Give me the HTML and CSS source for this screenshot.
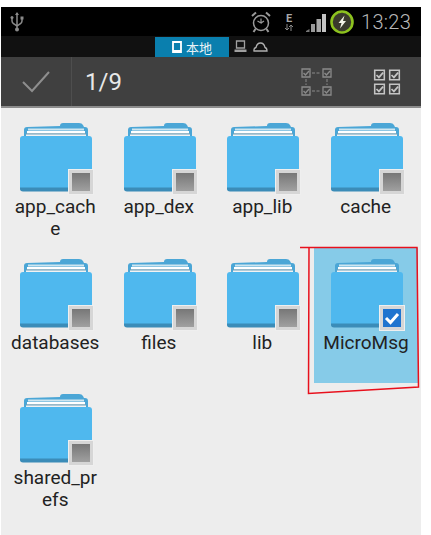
FILE: index.html
```html
<!DOCTYPE html>
<html lang="zh">
<head>
<meta charset="utf-8">
<title>Files</title>
<link rel="stylesheet" href="styles.css">
</head>
<body>
<svg class="defs" width="0" height="0">
  <defs>
    <symbol id="folder" viewBox="0 0 72 70">
      <path d="M40 4q0-3 3-3h16q3 0 4 2l1 2h1q3 0 3 3v10H4V8q0-3 3-3z" fill="#4ba6d6"/>
      <path d="M7 6h58v14H7z" fill="#4ba6d6"/>
      <path d="M8 6.500h56v2H8z" fill="#cfe6f0"/>
      <path d="M7 9h58v2.500H7z" fill="#ffffff"/>
      <path d="M6 11.500h60v1H6z" fill="#8c9ea6"/>
      <path d="M6 12.500h60v2H6z" fill="#f2f2f2"/>
      <path d="M0 17q0-3 3-3h66q3 0 3 3v49q0 3-3 3H3q-3 0-3-3z" fill="#4fb8ee"/>
      <path d="M0 65.500v1q0 3 3 3h66q3 0 3-3v-1z" fill="#3b8cb8"/>
    </symbol>
    <symbol id="box" viewBox="0 0 10 10">
      <path d="M1 1h8v8H1z" fill="none" stroke="currentColor" stroke-width="1.300"/>
      <path d="M2.500 5l2 2 3.500-4" fill="none" stroke="currentColor" stroke-width="1.400"/>
    </symbol>
  </defs>
</svg>

<main class="page">
  <header class="status">
    <svg class="usb" viewBox="0 0 14 20" width="14" height="20">
      <path d="M7 1v17M2 6v3q0 2 2 3l3 2 3-2q2-1 2-3V7" fill="none" stroke="#8a8a8a" stroke-width="1.500"/>
      <path d="M7 0l-2 3h4z" fill="#8a8a8a"/>
      <circle cx="7" cy="17.500" r="2" fill="#8a8a8a"/>
      <circle cx="2" cy="5.500" r="1.500" fill="#8a8a8a"/>
      <path d="M10.500 4.500h3v3h-3z" fill="#8a8a8a"/>
    </svg>
    <div class="status-right">
      <svg class="alarm" viewBox="0 0 20 22" width="20" height="22">
        <circle cx="10" cy="12" r="7.500" fill="none" stroke="#9a9a9a" stroke-width="1.500"/>
        <path d="M10 7.500V12l-3.500-2M10 12l3-2" fill="none" stroke="#9a9a9a" stroke-width="1.200"/>
        <path d="M1 5l4-3.500M19 5l-4-3.500M4.500 18l-2 3M15.500 18l2 3" fill="none" stroke="#9a9a9a" stroke-width="2"/>
      </svg>
      <div class="net">
        <span class="net-e">E</span>
        <svg viewBox="0 0 10 7" width="10" height="7">
          <path d="M3 0v6M1 4l2 2 2-2M7 7V1M5 3l2-2 2 2" fill="none" stroke="#8a8a8a" stroke-width="1"/>
        </svg>
      </div>
      <svg class="signal" viewBox="0 0 20 18" width="20" height="18">
        <path d="M0 18h3.500v-3L0 17z" fill="#777"/>
        <path d="M5 18h4v-8H5z" fill="#9a9a9a"/>
        <path d="M10.500 18H15V5h-4.500z" fill="#a8a8a8"/>
        <path d="M16 18h4V0h-4z" fill="#c4c4c4"/>
      </svg>
      <svg class="battery" viewBox="0 0 26 26" width="26" height="26">
        <circle cx="13" cy="13" r="9.500" fill="#3a3a2c"/>
        <circle cx="13" cy="13" r="10.500" fill="none" stroke="#8dc21f" stroke-width="2.600"/>
        <path d="M15.500 6.500L9.500 14h3l-1.500 5.500 6-7.500h-3z" fill="#f4f4e8"/>
      </svg>
      <span class="clock">13:23</span>
    </div>
  </header>

  <nav class="tabs">
    <div class="tab-active">
      <svg viewBox="0 0 10 12" width="10" height="12">
        <path d="M1 1h8v10H1z" fill="none" stroke="#fff" stroke-width="1.800"/>
        <path d="M1 9h8v2H1z" fill="#fff"/>
      </svg>
      <span>本地</span>
    </div>
    <svg class="tab-icon" viewBox="0 0 13 13" width="13" height="13">
      <path d="M2.500 1h8v7h-8z" fill="none" stroke="#a0a0a0" stroke-width="1.300"/>
      <path d="M0.500 9.500h12v2.500h-12z" fill="#a0a0a0"/>
    </svg>
    <svg class="tab-icon" viewBox="0 0 15 10" width="15" height="10">
      <path d="M1 9q-.5-3 2-3.500Q4 1 7.500 1 11 1 12 5.500q2 .5 2 3.500z" fill="none" stroke="#b0b0b0" stroke-width="1.300"/>
    </svg>
  </nav>

  <section class="actionbar">
    <div class="confirm">
      <svg viewBox="0 0 28 22" width="28" height="22">
        <path d="M1 11l9 9L27 1" fill="none" stroke="#8e8e8e" stroke-width="2"/>
      </svg>
    </div>
    <span class="count">1/9</span>
    <div class="actions">
      <svg class="tree" viewBox="0 0 32 28" width="32" height="28">
        <g color="#8a8a8a">
          <use href="#box" x="0" y="0" width="10" height="10"/>
          <use href="#box" x="21" y="0" width="10" height="10"/>
          <use href="#box" x="0" y="18" width="10" height="10"/>
          <use href="#box" x="21" y="18" width="10" height="10"/>
        </g>
        <path d="M11 5h8M11 23h8M5 11v6M26 11v6" stroke="#8a8a8a" stroke-dasharray="3 1.500" fill="none"/>
      </svg>
      <svg class="all" viewBox="0 0 28 26" width="28" height="26">
        <g color="#c4c4c4">
          <use href="#box" x="0" y="0" width="13" height="12"/>
          <use href="#box" x="15" y="0" width="13" height="12"/>
          <use href="#box" x="0" y="14" width="13" height="12"/>
          <use href="#box" x="15" y="14" width="13" height="12"/>
        </g>
      </svg>
    </div>
  </section>

  <section class="grid">
    <article class="item"><div class="icon"><svg class="folder-svg"><use href="#folder"/></svg><span class="badge"></span></div><p class="name">app_cache</p></article>
    <article class="item"><div class="icon"><svg class="folder-svg"><use href="#folder"/></svg><span class="badge"></span></div><p class="name">app_dex</p></article>
    <article class="item"><div class="icon"><svg class="folder-svg"><use href="#folder"/></svg><span class="badge"></span></div><p class="name">app_lib</p></article>
    <article class="item"><div class="icon"><svg class="folder-svg"><use href="#folder"/></svg><span class="badge"></span></div><p class="name">cache</p></article>
    <article class="item"><div class="icon"><svg class="folder-svg"><use href="#folder"/></svg><span class="badge"></span></div><p class="name">databases</p></article>
    <article class="item"><div class="icon"><svg class="folder-svg"><use href="#folder"/></svg><span class="badge"></span></div><p class="name">files</p></article>
    <article class="item"><div class="icon"><svg class="folder-svg"><use href="#folder"/></svg><span class="badge"></span></div><p class="name">lib</p></article>
    <article class="item selected"><div class="icon"><svg class="folder-svg"><use href="#folder"/></svg><span class="badge badge-on"><svg viewBox="0 0 16 14" width="16" height="14"><path d="M2 7l4.500 4.500L14 3" fill="none" stroke="#fff" stroke-width="3"/></svg></span></div><p class="name">MicroMsg</p></article>
    <article class="item"><div class="icon"><svg class="folder-svg"><use href="#folder"/></svg><span class="badge"></span></div><p class="name">shared_prefs</p></article>
  </section>

  <svg class="annotation" viewBox="0 0 431 535" width="431" height="535">
    <path d="M300 247.500H417L418.500 387L308.500 393.500L309 247.500" fill="none" stroke="#e8101c" stroke-width="1.500"/>
  </svg>
</main>
</body>
</html>
```

FILE: styles.css
```css
* { box-sizing: border-box; }

html, body {
  margin: 0;
  padding: 0;
  background: #fff;
}

.defs { position: absolute; }

.page {
  position: relative;
  width: 431px;
  height: 535px;
  padding: 7px 10px 0 1px;
  display: flex;
  flex-direction: column;
  overflow: hidden;
  font-family: Roboto, "Noto Sans CJK SC", sans-serif;
}

.status {
  height: 29px;
  flex: none;
  background: #000;
  display: flex;
  align-items: center;
  justify-content: space-between;
  padding-left: 9px;
}

.status-right {
  display: flex;
  align-items: center;
}

.alarm { margin-right: 12px; }

.net {
  width: 12px;
  display: flex;
  flex-direction: column;
  align-items: center;
  margin-right: 11px;
}

.net-e {
  color: #a8a8a8;
  font-size: 11px;
  font-weight: 700;
  line-height: 11px;
}

.signal { margin-right: 3px; margin-top: 3px; }

.battery { margin-right: 6px; }

.clock {
  color: #b8b8b8;
  font-size: 20px;
  font-weight: 300;
  width: 60px;
  letter-spacing: 0.3px;
}

.tabs {
  height: 21px;
  flex: none;
  background: #111;
  display: flex;
  align-items: center;
  padding-left: 154px;
}

.tab-active {
  width: 74px;
  height: 20px;
  margin-top: 1px;
  background: #0a7fae;
  display: flex;
  align-items: center;
  justify-content: center;
  gap: 4px;
  color: #e8f2f6;
  font-size: 13px;
  margin-right: 5px;
}

.tab-icon { margin-right: 6px; }

.actionbar {
  height: 51px;
  flex: none;
  background: #404040;
  border-bottom: 2px solid #8c8c8c;
  display: flex;
  align-items: center;
}

.confirm {
  width: 71px;
  height: 100%;
  border-right: 1px solid #4e4e4e;
  display: flex;
  align-items: center;
  justify-content: center;
  padding-right: 1px;
}

.count {
  color: #e8e8e8;
  font-size: 24px;
  margin-left: 13px;
}

.actions {
  margin-left: auto;
  display: flex;
  align-items: center;
  gap: 40px;
  padding-right: 20px;
}

.grid {
  flex: 1;
  background: #ededed;
  display: grid;
  grid-template-columns: repeat(4, 103.5px);
  grid-auto-rows: 135.5px;
  align-content: start;
  padding: 4px 0 0 2.5px;
}

.item {
  padding: 10px 0 0 2px;
  display: flex;
  flex-direction: column;
  align-items: center;
}

.item.selected { background: #86cbe8; width: 104px; height: 135px; }

.icon {
  position: relative;
  width: 72px;
  height: 70px;
}

.folder-svg {
  display: block;
  width: 72px;
  height: 70px;
}

.badge {
  position: absolute;
  right: -1px;
  bottom: -2px;
  width: 24px;
  height: 24px;
  border: 3px solid #d6d6d6;
  background: linear-gradient(#777, #a0a0a0);
  box-shadow: 0 0 0 1px #efefef;
}

.badge-on {
  background: #1f74cf;
  display: flex;
  align-items: center;
  justify-content: center;
}

.name {
  margin: 4px 0 0 -2px;
  width: 90px;
  text-align: center;
  color: #222;
  font-size: 19px;
  line-height: 22px;
  word-break: break-all;
}

.annotation {
  position: absolute;
  left: 0;
  top: 0;
  pointer-events: none;
}
```
